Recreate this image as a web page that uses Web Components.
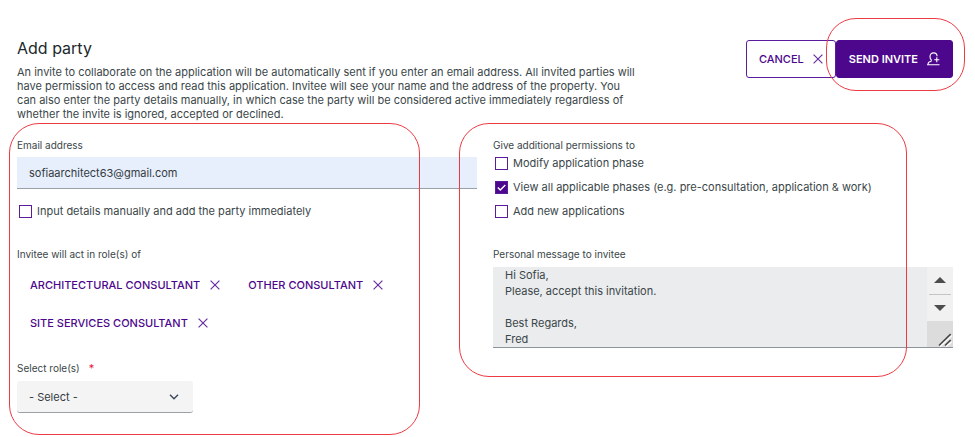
<!DOCTYPE html>
<html lang="en">
<head>
<meta charset="UTF-8">
<meta name="viewport" content="width=device-width, initial-scale=1">
<title>Add party</title>
<style>
    body {
        margin: 0;
        background: #fff;
        color: #3a4649;
        font: 11px/14px Inter, "Liberation Sans", sans-serif;
        --brand: #4d078c;
        --outline: #5a1c9c;
        --line: #9a9fa8;
    }
</style>
</head>
<body>
<add-party-page></add-party-page>

<script>
// red outline laid over the section that contains it
class MarkOutline extends HTMLElement {
    constructor() {
        super();
        this.attachShadow({ mode: 'open' });
        this.shadowRoot.innerHTML = `
            <style>
                :host {
                    position: absolute;
                    box-sizing: border-box;
                    border: 1px solid #ee3a43;
                    border-radius: 30px;
                    pointer-events: none;
                    z-index: 2;
                }
            </style>
        `;
    }
}

class CloseIcon extends HTMLElement {
    constructor() {
        super();
        this.attachShadow({ mode: 'open' });
        this.shadowRoot.innerHTML = `
            <style>
                :host { display: inline-flex; }
                svg { display: block; }
            </style>
            <svg width="10" height="10" viewBox="0 0 10 10" fill="none" stroke="#6a30a3" stroke-width="1.2">
                <path d="M.6.6 9.4 9.4M9.4.6.6 9.4"/>
            </svg>
        `;
    }
}

class ActionButton extends HTMLElement {
    constructor() {
        super();
        this.attachShadow({ mode: 'open' });
        this.shadowRoot.innerHTML = `
            <style>
                :host { display: flex; }
                button {
                    display: flex;
                    align-items: center;
                    gap: 9px;
                    height: 38px;
                    padding: 0 12px;
                    border: 1px solid var(--outline);
                    border-radius: 3px;
                    background: #fff;
                    color: var(--brand);
                    font: 500 11px/16px Inter, "Liberation Sans", sans-serif;
                    white-space: nowrap;
                    cursor: pointer;
                }
                :host([primary]) button {
                    border-color: var(--brand);
                    background: var(--brand);
                    color: #fff;
                    font-weight: 600;
                }
            </style>
            <button type="button"><slot></slot><slot name="icon"></slot></button>
        `;
    }
}

class CheckField extends HTMLElement {
    constructor() {
        super();
        this.attachShadow({ mode: 'open' });
        this.shadowRoot.innerHTML = `
            <style>
                :host { display: block; }
                label {
                    display: flex;
                    align-items: center;
                    gap: 5px;
                    padding-left: 2px;
                    line-height: 16px;
                }
                input {
                    appearance: none;
                    box-sizing: border-box;
                    width: 13px;
                    height: 13px;
                    margin: 0;
                    border: 1px solid var(--outline);
                    background: #fff;
                }
                .box { display: grid; }
                .box > * { grid-area: 1 / 1; }
                svg { display: none; pointer-events: none; }
                input:checked { background: var(--brand); }
                input:checked + svg { display: block; }
            </style>
            <label>
                <span class="box">
                    <input type="checkbox">
                    <svg width="13" height="13" viewBox="0 0 13 13" fill="none" stroke="#fff" stroke-width="1.4">
                        <path d="M2.8 6.6 5.3 9.1 10.3 4"/>
                    </svg>
                </span>
                <span><slot></slot></span>
            </label>
        `;
        this.shadowRoot.querySelector('input').checked = this.hasAttribute('checked');
    }
}

class RoleChip extends HTMLElement {
    constructor() {
        super();
        this.attachShadow({ mode: 'open' });
        this.shadowRoot.innerHTML = `
            <style>
                :host { display: block; }
                button {
                    display: flex;
                    align-items: center;
                    gap: 10px;
                    height: 38px;
                    padding: 0 13px;
                    border: 0;
                    background: none;
                    color: var(--brand);
                    font: 500 11px/16px Inter, "Liberation Sans", sans-serif;
                    white-space: nowrap;
                    cursor: pointer;
                }
            </style>
            <button type="button"><slot></slot><close-icon></close-icon></button>
        `;
        this.shadowRoot.querySelector('button').addEventListener('click', this._remove.bind(this));
    }

    _remove() {
        this.remove();
    }
}

class EmailField extends HTMLElement {
    constructor() {
        super();
        this.attachShadow({ mode: 'open' });
        this.shadowRoot.innerHTML = `
            <style>
                :host { display: block; }
                label { display: block; font-size: 10px; line-height: 12px; margin-bottom: 6px; }
                input {
                    display: block;
                    box-sizing: border-box;
                    width: 100%;
                    height: 32px;
                    padding: 0 12px;
                    border: 0;
                    border-bottom: 1px solid var(--line);
                    border-radius: 0;
                    background: #e7effd;
                    color: #343b42;
                    font: 11px/16px Inter, "Liberation Sans", sans-serif;
                }
            </style>
            <label for="email">Email address</label>
            <input type="email" id="email" value="sofiaarchitect63@gmail.com">
        `;
    }
}

class RoleSelect extends HTMLElement {
    constructor() {
        super();
        this.attachShadow({ mode: 'open' });
        this.shadowRoot.innerHTML = `
            <style>
                :host { display: block; }
                label { display: flex; gap: 9px; font-size: 10px; line-height: 12px; margin-bottom: 7px; }
                .req { color: #e5193c; font-size: 11px; }
                .wrap { display: grid; align-items: center; width: 176px; }
                .wrap > * { grid-area: 1 / 1; }
                select {
                    appearance: none;
                    box-sizing: border-box;
                    width: 100%;
                    height: 32px;
                    padding: 0 12px;
                    border: 0;
                    border-bottom: 1px solid var(--line);
                    border-radius: 3px;
                    background: #f4f4f4;
                    color: #343b42;
                    font: 11px/16px Inter, "Liberation Sans", sans-serif;
                }
                svg { justify-self: end; margin-right: 14px; pointer-events: none; }
            </style>
            <label for="role">Select role(s) <span class="req">*</span></label>
            <div class="wrap">
                <select id="role"><option>- Select -</option></select>
                <svg width="10" height="6" viewBox="0 0 10 6" fill="none" stroke="#3b4855" stroke-width="1.4">
                    <path d="M1 .8 5 4.8 9 .8"/>
                </svg>
            </div>
        `;
    }
}

class MessageField extends HTMLElement {
    constructor() {
        super();
        this.attachShadow({ mode: 'open' });
        this.shadowRoot.innerHTML = `
            <style>
                :host { display: block; }
                label { display: block; font-size: 10px; line-height: 12px; margin-bottom: 7px; }
                .box { display: flex; border-bottom: 1px solid #8d939c; background: #ebecee; }
                textarea {
                    flex: 1;
                    min-width: 0;
                    height: 80px;
                    box-sizing: border-box;
                    margin: 0;
                    padding: 0 12px;
                    border: 0;
                    background: none;
                    color: #3a4649;
                    font: 11px/16px Inter, "Liberation Sans", sans-serif;
                    overflow: hidden;
                    resize: none;
                }
                .bar {
                    display: flex;
                    flex-direction: column;
                    width: 26px;
                    background: #f1f1f1;
                }
                .bar button {
                    display: grid;
                    place-items: center;
                    flex: 1;
                    padding: 0;
                    border: 0;
                    background: none;
                }
                .rule { height: 1px; margin: 0 2px; background: #c4c4c4; }
                .grip { display: flex; height: 26px; justify-content: flex-end; align-items: flex-end; background: #dcdcdc; }
                svg { display: block; }
            </style>
            <label for="message">Personal message to invitee</label>
            <div class="box">
                <textarea id="message">Hi Sofia,
Please, accept this invitation.

Best Regards,
Fred</textarea>
                <div class="bar">
                    <button type="button" class="up" aria-label="Scroll up">
                        <svg width="12" height="6" viewBox="0 0 12 6" fill="#4d4d4d"><path d="M6 0 12 6H0z"/></svg>
                    </button>
                    <div class="rule"></div>
                    <button type="button" class="down" aria-label="Scroll down">
                        <svg width="12" height="6" viewBox="0 0 12 6" fill="#4d4d4d"><path d="M6 6 12 0H0z"/></svg>
                    </button>
                    <div class="grip">
                        <svg width="15" height="14" viewBox="0 0 15 14" fill="none" stroke-width="1.7">
                            <path d="M2 13.5 13.5 2.5M8 13.5 13.5 8.5" stroke="#fff"/>
                            <path d="M1 12.5 12.7 1.2M7 12.5 12.7 7.2" stroke="#4a4a4a"/>
                        </svg>
                    </div>
                </div>
            </div>
        `;
        const area = this.shadowRoot.querySelector('textarea');
        this.shadowRoot.querySelector('.up').addEventListener('click', () => area.scrollBy(0, -16));
        this.shadowRoot.querySelector('.down').addEventListener('click', () => area.scrollBy(0, 16));
    }
}

class AddPartyPage extends HTMLElement {
    constructor() {
        super();
        this.attachShadow({ mode: 'open' });
        this.shadowRoot.innerHTML = `
            <style>
                :host { display: block; padding: 39px 22px 24px 17px; }
                header { display: flex; justify-content: space-between; align-items: flex-start; }
                h1 { margin: 0 0 8px; font-size: 16px; line-height: 18px; font-weight: 400; color: #20282c; }
                p { margin: 0; max-width: 621px; }
                .actions { position: relative; display: flex; margin-top: 1px; }
                .columns { display: grid; grid-template-columns: 1fr 1fr; gap: 16px; margin-top: 18px; }
                section { position: relative; display: flex; flex-direction: column; }
                .caption { font-size: 10px; line-height: 12px; }
                .manual { margin: 14px 0 29px; }
                .chips { display: flex; flex-wrap: wrap; margin: 6px 0 20px; max-width: 400px; column-gap: 2px; }
                .perms { display: flex; flex-direction: column; gap: 8px; margin: 4px 0 29px; }
                .mark-send { left: 80px; right: -12px; top: -22px; bottom: -13px; }
                .mark-left { left: -8px; right: 57px; top: -16px; bottom: -22px; }
                .mark-right { left: -34px; right: 46px; top: -16px; height: 254px; }
            </style>
            <header>
                <div>
                    <h1>Add party</h1>
                    <p>An invite to collaborate on the application will be automatically sent if you enter an email address. All invited parties will have permission to access and read this application. Invitee will see your name and the address of the property. You can also enter the party details manually, in which case the party will be considered active immediately regardless of whether the invite is ignored, accepted or declined.</p>
                </div>
                <div class="actions">
                    <action-button>CANCEL<close-icon slot="icon"></close-icon></action-button>
                    <action-button primary>SEND INVITE
                        <svg slot="icon" width="13" height="14" viewBox="0 0 13 14" fill="none" stroke="#fff" stroke-width="1.1">
                            <path d="M4.600 8.300C3.500 7.500 3 6.300 3 4.700 3 2.300 4.500.900 6.600.900c2 0 3.400 1.300 3.500 3.300M4.600 8.300 4 9.300 1.600 10.300.7 12.800H12.500M9.800 5.200v5M7.300 7.700h5"/>
                        </svg>
                    </action-button>
                    <mark-outline class="mark-send"></mark-outline>
                </div>
            </header>
            <div class="columns">
                <section>
                    <email-field></email-field>
                    <check-field class="manual">Input details manually and add the party immediately</check-field>
                    <div class="caption">Invitee will act in role(s) of</div>
                    <div class="chips">
                        <role-chip>ARCHITECTURAL CONSULTANT</role-chip>
                        <role-chip>OTHER CONSULTANT</role-chip>
                        <role-chip>SITE SERVICES CONSULTANT</role-chip>
                    </div>
                    <role-select></role-select>
                    <mark-outline class="mark-left"></mark-outline>
                </section>
                <section>
                    <div class="caption">Give additional permissions to</div>
                    <div class="perms">
                        <check-field>Modify application phase</check-field>
                        <check-field checked>View all applicable phases (e.g. pre-consultation, application &amp; work)</check-field>
                        <check-field>Add new applications</check-field>
                    </div>
                    <message-field></message-field>
                    <mark-outline class="mark-right"></mark-outline>
                </section>
            </div>
        `;
    }
}

customElements.define('mark-outline', MarkOutline);
customElements.define('close-icon', CloseIcon);
customElements.define('action-button', ActionButton);
customElements.define('check-field', CheckField);
customElements.define('role-chip', RoleChip);
customElements.define('email-field', EmailField);
customElements.define('role-select', RoleSelect);
customElements.define('message-field', MessageField);
customElements.define('add-party-page', AddPartyPage);
</script>
</body>
</html>
